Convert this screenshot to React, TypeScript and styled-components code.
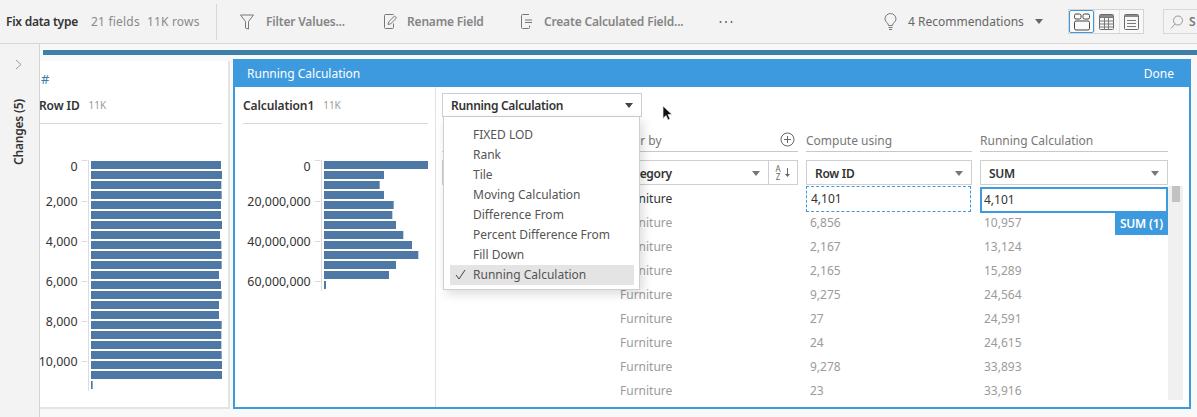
import React from "react";
import styled, { createGlobalStyle } from "styled-components";

const Global = createGlobalStyle`
  html, body { margin: 0; padding: 0; background: #f6f6f6; }
  body { font-family: "Noto Sans", "Open Sans", sans-serif; font-size: 12px; color: #333; overflow: hidden; }
  * { box-sizing: border-box; }
`;

const Page = styled.div`
  width: 1197px; height: 417px; display: flex; flex-direction: column; overflow: hidden;
`;
const Toolbar = styled.header`
  height: 44px; flex: none; display: flex; align-items: center; background: #f3f3f3;
  border-bottom: 1px solid #d6d6d6; padding-left: 6px; white-space: nowrap;
`;
const Title = styled.div`
  width: 85px; font-weight: 600; letter-spacing: -0.25px; color: #333;
`;
const Stats = styled.div`
  width: 125px; color: #8a8a8a; display: flex; gap: 7px; letter-spacing: 0.2px;
`;
const Divider = styled.div`
  width: 1px; height: 36px; background: #d8d8d8; margin-right: 23px;
`;
const Action = styled.div<{ $w: number; $gap: number }>`
  width: ${p => p.$w}px; flex: none; display: flex; align-items: center; gap: ${p => p.$gap}px;
  color: #858585; font-weight: 600; letter-spacing: -0.18px;
  svg { flex: none; }
`;
const Dots = styled.div`
  width: 165px; flex: none; display: flex;
`;
const Reco = styled.div`
  width: 184px; flex: none; display: flex; align-items: center; color: #666;
`;
const RecoText = styled.span`
  width: 127px; margin-left: 11px;
`;
const Caret = styled.i<{ $c?: string }>`
  display: block; flex: none; width: 0; height: 0; border-left: 4px solid transparent; border-right: 4px solid transparent;
  border-top: 5px solid ${p => p.$c || "#666"};
`;
const ToggleGroup = styled.div`
  width: 76px; height: 25px; flex: none; display: flex; border: 1px solid #d4d4d4; margin-right: 19px; background: #f8f8f8;
`;
const Toggle = styled.div<{ $on?: boolean }>`
  width: 25px; display: flex; align-items: center; justify-content: center; flex: 1;
  ${p => p.$on ? "border: 1px solid #3d9ade; border-radius: 2px; background: #fafafa;" : "border-left: 1px solid #e2e2e2;"}
`;
const SearchBox = styled.div`
  flex: 1; height: 25px; border: 1px solid #d8d8d8; border-right: none; display: flex; align-items: center;
  padding-left: 6px; gap: 6px; color: #777; overflow: hidden; font-weight: 600;
`;

const Body = styled.div`
  flex: 1; min-height: 0; display: flex;
`;
const Sidebar = styled.aside`
  width: 40px; flex: none; background: #f3f3f3; border-right: 1px solid #d4d4d4; position: relative; z-index: 2;
  display: flex; flex-direction: column; align-items: center; padding-top: 15px; padding-right: 2px;
`;
const ChangesLabel = styled.div`
  writing-mode: vertical-rl; transform: rotate(180deg); font-weight: 600; font-size: 12px; color: #333; margin-top: 29px; letter-spacing: -0.2px;
`;
const Main = styled.main`
  flex: 1; min-width: 0; display: flex; flex-direction: column; padding-top: 6px; background: #f8f8f8;
`;
const Strip = styled.div`
  height: 5px; margin-left: 3px; background: #3d7fa6; flex: none;
`;
const Work = styled.div`
  display: flex; margin-top: 4px; align-items: flex-start;
`;
const FieldCard = styled.section`
  width: 190px; height: 348px; margin-top: 2px; background: #fff; border-right: 2px solid #e4e4e4; border-bottom: 2px solid #e4e4e4;
  overflow: hidden; flex: none; display: flex; flex-direction: column;
`;
const Hash = styled.div`
  height: 26px; flex: none; padding-left: 1px; padding-top: 9px; color: #3d7fa6; font-size: 13px; line-height: 18px;
`;
const FieldHead = styled.div<{ $shift: number; $inset: number }>`
  height: 37px; flex: none; margin: 0 ${p => p.$inset}px 0 ${p => p.$shift}px; display: flex; align-items: center; gap: 9px;
  border-bottom: 1px solid #d8d8d8;
`;
const FieldName = styled.span`
  font-weight: 600; color: #333; letter-spacing: -0.1px;
`;
const FieldCount = styled.span`
  color: #999; font-size: 10px;
`;
const Panel = styled.section`
  width: 958px; height: 350px; margin-left: 3px; flex: none; border: 2px solid #3d9ade; border-top: none; display: flex; flex-direction: column; background: #fff;
`;
const PanelHeader = styled.div`
  height: 28px; flex: none; margin: 0 -2px; background: #3d9ade; color: #fff; display: flex; align-items: center; justify-content: space-between;
  padding: 0 17px 0 14px;
`;
const PanelBody = styled.div`
  flex: 1; min-height: 0; display: flex;
`;
const CalcColumn = styled.div`
  width: 201px; flex: none; border-right: 1px solid #e2e2e2; padding: 0;
`;
const Editor = styled.div`
  flex: 1; min-width: 0; padding: 6px 0 0 6px; position: relative; overflow: hidden;
`;
const DropWrap = styled.div`
  position: relative; width: 200px; z-index: 3;
`;
const Select = styled.div`
  height: 25px; border: 1px solid #cfcfcf; background: #fff; display: flex; align-items: center; justify-content: space-between;
  padding: 1px 8px 0; font-weight: 600; color: #333; letter-spacing: -0.3px;
`;
const TopSelect = styled(Select)`
  height: 24px;
`;
const Menu = styled.ul`
  position: absolute; left: 1px; top: 100%; width: 197px; height: 173px; margin: 0; padding: 8px 5px 0 6px; list-style: none; background: #fff;
  border: 1px solid #cfcfcf; border-top: none; box-shadow: 3px 4px 10px rgba(0,0,0,0.14);
`;
const MenuItem = styled.li<{ $on?: boolean }>`
  height: 20px; line-height: 20px; padding-left: 23px; color: #555; position: relative;
  background: ${p => p.$on ? "#e4e4e4" : "transparent"};
  svg { position: absolute; left: 5px; top: 4px; }
`;
const Cursor = styled.svg`
  position: absolute; left: 226px; top: 18px; z-index: 4;
`;
const Grid = styled.div`
  display: grid; grid-template-columns: 162px 186px 166px 188px 15px; column-gap: 8px; margin-top: 14px;
  grid-template-rows: 21px 34px repeat(9, 24px);
`;
const ColLabel = styled.div`
  border-bottom: 1px solid #c8c8c8; color: #777; display: flex; justify-content: space-between; align-items: flex-start; line-height: 19px;
`;
const PlusWrap = styled.span`
  display: flex; margin-right: 3px; margin-top: 1px;
`;
const SelectSlot = styled.div`
  margin-top: 8px; height: 25px; display: flex;
`;
const Grow = styled(Select)`
  flex: 1;
`;
const SortBtn = styled.div`
  width: 29px; flex: none; border: 1px solid #cfcfcf; border-left: none; display: flex; align-items: center; justify-content: center; gap: 3px;
  color: #666; background: #fff;
`;
const SortAZ = styled.span`
  display: flex; flex-direction: column; font-size: 8px; line-height: 8px; text-align: center;
`;
const Cell = styled.div<{ $col: number; $first?: boolean; $pad: number }>`
  grid-column: ${p => p.$col}; padding-left: ${p => p.$pad}px; line-height: 24px; color: ${p => p.$first ? "#333" : "#9b9b9b"}; position: relative; margin-top: 1px;
`;
const DashedCell = styled(Cell)`
  border: 1px dashed #3d9ade; margin: 0 1px 0 0; height: 26px; padding-left: 4px;
`;
const ActiveCell = styled(Cell)`
  border: 2px solid #3d9ade; height: 26px; margin-top: 1px; padding-left: 2px; line-height: 22px; z-index: 1;
`;
const Badge = styled.div`
  position: absolute; right: -2px; top: 24px; width: 53px; height: 22px; background: #3d9ade; color: #fff; font-weight: 600; text-align: center; line-height: 22px; letter-spacing: -0.2px;
`;
const Scroll = styled.div`
  grid-column: 5; grid-row: 3 / span 9; margin-left: -8px; width: 15px; height: 214px; background: #f0f0f0; padding: 0 3px 0 4px;
`;
const Thumb = styled.div`
  height: 16px; background: #c2c2c2;
`;
const BottomFill = styled.div`
  height: 8px;
`;
const ChartSvg = styled.svg`
  display: block; flex: none;
`;

const idBars = [663,666,664,665,663,663,666,660,664,665,665,657,663,665,657,657,665,664,664,665,666,666,278].map(v => (v - 273) / 3);
const calcBars = [1284,1152,1139,1152,1181,1177,1188,1210,1236,1255,1188,1167,978].map(v => (v - 972) / 3);

function Chart(p: { x: number; w: number; axis: number; barX: number; bars: number[]; labels: string[]; labelX: number; end: number }) {
  const ys = [160, 201, 241, 281, 321, 361];
  return (
    <ChartSvg width={p.w} height={270} viewBox={`${p.x} 124 ${p.w} 270`}>
      <line x1={p.axis} x2={p.axis} y1={160} y2={p.end} stroke="#dcdcdc" />
      {p.labels.map((l, i) => (
        <g key={l}>
          <line x1={p.axis - 7} x2={p.axis - 1} y1={ys[i] + 0.5} y2={ys[i] + 0.5} stroke="#dcdcdc" />
          <text x={p.labelX} y={i === 0 ? 171 : ys[i] + 5.2} textAnchor="end" fontSize="12.4" fill="#333" fontFamily="'Noto Sans', sans-serif">{l}</text>
        </g>
      ))}
      {p.bars.map((w, i) => (
        <rect key={i} x={p.barX} y={161 + i * 10} width={w} height={8} fill="#4e79a7" />
      ))}
    </ChartSvg>
  );
}

const stroke = { fill: "none", stroke: "#777", strokeWidth: 1 } as const;

const FilterIcon = () => (
  <svg width="14" height="16" viewBox="0 0 14 16"><path d="M.5 1h13L8.500 7.500V15l-3-1V7.500z" {...stroke} /></svg>
);
const RenameIcon = () => (
  <svg width="14" height="15" viewBox="0 0 14 15"><path d="M9.500.5H1.500a1 1 0 0 0-1 1v12a1 1 0 0 0 1 1h7a1 1 0 0 0 1-1V9.500" {...stroke} /><path d="M4 10.500l.8-2.800L10.500 2l2 2-5.700 5.700z" {...stroke} /></svg>
);
const CalcIcon = () => (
  <svg width="12" height="15" viewBox="0 0 12 15"><path d="M8 .5H1.500a1 1 0 0 0-1 1v12a1 1 0 0 0 1 1h6a1 1 0 0 0 1-1v-2M4 6h7M4 8.500h7" {...stroke} /></svg>
);
const DotsIcon = () => (
  <svg width="14" height="4" viewBox="0 0 14 4"><circle cx="1.500" cy="2" r="1" fill="#666" /><circle cx="7" cy="2" r="1" fill="#666" /><circle cx="12.500" cy="2" r="1" fill="#666" /></svg>
);
const BulbIcon = () => (
  <svg width="13" height="18" viewBox="0 0 13 18"><path d="M4.500 12.500C4.500 10 1 9 1 6a5.500 5.500 0 0 1 11 0c0 3-3.500 4-3.500 6.500z" {...stroke} /><path d="M4.500 14.500h4M5 16.500h3" {...stroke} /></svg>
);
const PlanIcon = () => (
  <svg width="16" height="18" viewBox="0 0 16 18"><rect x=".5" y="1" width="6.500" height="5" rx="1.500" fill="none" stroke="#444" /><rect x="9" y="1" width="6.500" height="5" rx="1.500" fill="none" stroke="#444" /><rect x=".5" y="8" width="15" height="9" rx="1.500" fill="none" stroke="#444" /></svg>
);
const TableIcon = () => (
  <svg width="15" height="16" viewBox="0 0 15 16"><rect x=".5" y=".5" width="14" height="15" rx="1" fill="none" stroke="#6a6a6a" /><path d="M1 1h13v2H1z" fill="#8a8a8a" /><path d="M.5 3.500h14M.5 7h14M.5 10h14M.5 13h14M5.500 4v12M9.500 4v12" stroke="#7a7a7a" fill="none" /></svg>
);
const ListIcon = () => (
  <svg width="15" height="16" viewBox="0 0 15 16"><rect x=".5" y=".5" width="14" height="15" rx="1" fill="none" stroke="#6a6a6a" /><path d="M1 1h13v2H1z" fill="#8a8a8a" /><path d="M3 6.500h9M3 9.500h9M3 12.500h9" stroke="#7a7a7a" fill="none" /></svg>
);
const SearchIcon = () => (
  <svg width="13" height="14" viewBox="0 0 13 14"><circle cx="8" cy="5.500" r="4.500" fill="none" stroke="#999" /><path d="M5 9l-4 4.500" fill="none" stroke="#999" /></svg>
);
const Chevron = () => (
  <svg width="7" height="11" viewBox="0 0 7 11"><path d="M1 1l5 4.500L1 10" fill="none" stroke="#999" /></svg>
);
const Plus = () => (
  <svg width="15" height="15" viewBox="0 0 15 15"><circle cx="7.500" cy="7.500" r="6.500" fill="none" stroke="#666" /><path d="M7.500 4v7M4 7.500h7" stroke="#666" fill="none" /></svg>
);
const Check = () => (
  <svg width="11" height="11" viewBox="0 0 11 11"><path d="M1 6l3 4 6-9" fill="none" stroke="#444" /></svg>
);
const SortArrow = () => (
  <svg width="7" height="11" viewBox="0 0 7 11"><path d="M3.500 1v8" stroke="#666" fill="none" /><path d="M1 7l2.500 3L6 7z" fill="#666" /></svg>
);

const rows = [
  ["6,856", "10,957"], ["2,167", "13,124"], ["2,165", "15,289"], ["9,275", "24,564"],
  ["27", "24,591"], ["24", "24,615"], ["9,278", "33,893"], ["23", "33,916"],
];
const menu = ["FIXED LOD", "Rank", "Tile", "Moving Calculation", "Difference From", "Percent Difference From", "Fill Down", "Running Calculation"];

export default function App() {
  return (
    <Page>
      <Global />
      <Toolbar>
        <Title>Fix data type</Title>
        <Stats><span>21 fields</span><span>11K rows</span></Stats>
        <Divider />
        <Action $w={144} $gap={12}><FilterIcon />Filter Values...</Action>
        <Action $w={137} $gap={9}><RenameIcon />Rename Field</Action>
        <Action $w={198} $gap={11}><CalcIcon />Create Calculated Field...</Action>
        <Dots><DotsIcon /></Dots>
        <Reco><BulbIcon /><RecoText>4 Recommendations</RecoText><Caret /></Reco>
        <ToggleGroup>
          <Toggle $on><PlanIcon /></Toggle>
          <Toggle><TableIcon /></Toggle>
          <Toggle><ListIcon /></Toggle>
        </ToggleGroup>
        <SearchBox><SearchIcon />S</SearchBox>
      </Toolbar>
      <Body>
        <Sidebar>
          <Chevron />
          <ChangesLabel>Changes (5)</ChangesLabel>
        </Sidebar>
        <Main>
          <Strip />
          <Work>
            <FieldCard>
              <Hash>#</Hash>
              <FieldHead $shift={-1} $inset={6}><FieldName>Row ID</FieldName><FieldCount>11K</FieldCount></FieldHead>
              <Chart x={40} w={188} axis={88.5} barX={91} bars={idBars} end={391} labelX={77.5}
                labels={["0", "2,000", "4,000", "6,000", "8,000", "10,000"]} />
            </FieldCard>
            <Panel>
              <PanelHeader><span>Running Calculation</span><span>Done</span></PanelHeader>
              <PanelBody>
                <CalcColumn>
                  <FieldHead $shift={8} $inset={7}><FieldName>Calculation1</FieldName><FieldCount>11K</FieldCount></FieldHead>
                  <Chart x={235} w={200} axis={321.5} barX={324} bars={calcBars} end={291} labelX={310.7}
                    labels={["0", "20,000,000", "40,000,000", "60,000,000"]} />
                </CalcColumn>
                <Editor>
                  <DropWrap>
                    <TopSelect>Running Calculation<Caret $c="#444" /></TopSelect>
                    <Menu>
                      {menu.map((m, i) => (
                        <MenuItem key={m} $on={i === 7}>{i === 7 && <Check />}{m}</MenuItem>
                      ))}
                    </Menu>
                  </DropWrap>
                  <Cursor width="11" height="17" viewBox="0 0 11 17">
                    <path d="M1 1v12.500l3-3 2 4.500 2-1-2-4.500h4z" fill="#111" stroke="#eee" strokeWidth=".7" />
                  </Cursor>
                  <Grid>
                    <ColLabel />
                    <ColLabel>Order by<PlusWrap><Plus /></PlusWrap></ColLabel>
                    <ColLabel>Compute using</ColLabel>
                    <ColLabel>Running Calculation</ColLabel>
                    <div />
                    <SelectSlot><Grow /></SelectSlot>
                    <SelectSlot>
                      <Grow>Category<Caret $c="#777" /></Grow>
                      <SortBtn><SortAZ><span>A</span><span>Z</span></SortAZ><SortArrow /></SortBtn>
                    </SelectSlot>
                    <SelectSlot><Grow>Row ID<Caret $c="#777" /></Grow></SelectSlot>
                    <SelectSlot><Grow>SUM<Caret $c="#777" /></Grow></SelectSlot>
                    <Scroll><Thumb /></Scroll>
                    <Cell $col={2} $pad={8} $first>Furniture</Cell>
                    <DashedCell $col={3} $pad={4} $first>4,101</DashedCell>
                    <ActiveCell $col={4} $pad={2} $first>4,101<Badge>SUM (1)</Badge></ActiveCell>
                    {rows.map(r => (
                      <React.Fragment key={r[1]}>
                        <Cell $col={2} $pad={8}>Furniture</Cell>
                        <Cell $col={3} $pad={4}>{r[0]}</Cell>
                        <Cell $col={4} $pad={4}>{r[1]}</Cell>
                      </React.Fragment>
                    ))}
                  </Grid>
                </Editor>
              </PanelBody>
            </Panel>
          </Work>
          <BottomFill />
        </Main>
      </Body>
    </Page>
  );
}
